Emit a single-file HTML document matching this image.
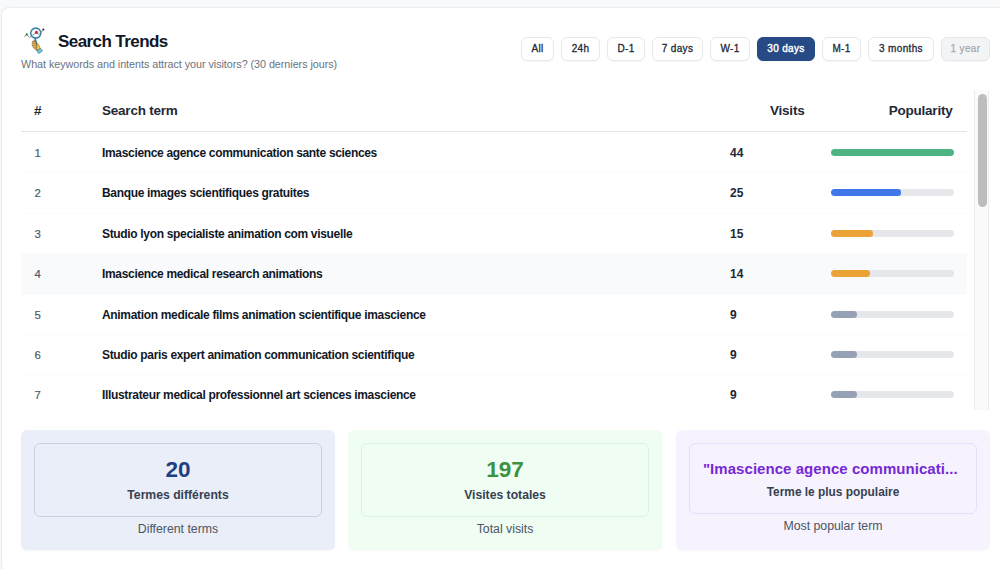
<!DOCTYPE html>
<html lang="en">
<head>
<meta charset="utf-8">
<title>Search Trends</title>
<style>
*{box-sizing:border-box;margin:0;padding:0}
html,body{width:1000px;height:569px;overflow:hidden}
body{background:#f8f9fb;font-family:"Liberation Sans",sans-serif;color:#111827;position:relative}
.card{position:absolute;left:1px;top:7px;width:1010px;height:566px;background:#fff;border-radius:8px;border:1px solid #ededf0;box-shadow:0 0 2px rgba(0,0,0,.04)}
.abs{position:absolute;white-space:nowrap}
h1{position:absolute;left:58px;top:30.500px;font-size:17px;line-height:22px;font-weight:700;color:#111827;white-space:nowrap;letter-spacing:-0.58px}
.sub{left:21px;top:57px;font-size:10.800px;line-height:14px;color:#6b7280;letter-spacing:-0.055px}
.btns{position:absolute;top:37px;left:0;height:24px}
.btn{position:absolute;top:0;height:24px;border:1px solid #e6e8ec;border-radius:6px;background:#fff;font-size:10px;line-height:22px;text-align:center;letter-spacing:0.330px;color:#1f2937;font-weight:400;-webkit-text-stroke:0.3px #1f2937;white-space:nowrap;box-shadow:0 1px 1px rgba(0,0,0,.03)}
.btn.on{background:#264a85;border-color:#264a85;color:#fff;-webkit-text-stroke:0.4px #fff}
.btn.dis{background:#f3f4f6;border-color:#e5e7eb;color:#a3a9b3;-webkit-text-stroke:0.250px #a3a9b3}
.th{font-size:13.500px;line-height:18px;font-weight:700;color:#1f2937;top:102px;letter-spacing:-0.220px}
.hline{position:absolute;left:21px;top:131px;width:946px;height:1px;background:#e2e4e8}
.row{position:absolute;left:21px;width:946px;height:41px}
.row.alt{background:#f9fafc}
.row.bd{box-shadow:inset 0 1px 0 #f9fafb}
.row .n{position:absolute;left:13.500px;top:13px;font-size:11.400px;line-height:16px;color:#4b5563;-webkit-text-stroke:0.150px #4b5563}
.row .t{position:absolute;left:81px;top:13px;font-size:12px;line-height:16px;color:#111827;font-weight:700;white-space:nowrap;letter-spacing:-0.330px}
.row .v{position:absolute;left:709px;top:13px;font-size:12px;line-height:16px;color:#1f2937;font-weight:700}
.row .bar{position:absolute;left:810px;top:17px;width:122.500px;height:6.500px;border-radius:3.250px;background:#e5e7eb;overflow:hidden}
.row .bar i{display:block;height:6.500px;border-radius:3.250px}
.strack{position:absolute;left:974px;top:90px;width:15px;height:320px;background:#fafafa;border-left:1px solid #ececec;border-right:1px solid #ececec}
.sthumb{position:absolute;left:978px;top:94px;width:9px;height:113px;border-radius:5px;background:#bdbdbd}
.stat{position:absolute;top:429.600px;width:314px;height:120px;border-radius:6px;box-shadow:0 1px 2px rgba(0,0,0,.035)}
.stat .in{position:absolute;left:13px;top:13px;width:288px;height:74px;border-radius:6px;border:1px solid}
.stat .num{position:absolute;left:0;width:100%;text-align:center;top:13.600px;font-size:22.500px;line-height:26px;font-weight:700}
.stat .lab{position:absolute;left:0;width:100%;text-align:center;top:43.600px;font-size:12.200px;line-height:16px;font-weight:700;color:#374151}
.stat .ft{position:absolute;left:0;width:100%;text-align:center;top:91.600px;font-size:12.300px;line-height:16px;color:#4b5563}
</style>
</head>
<body>
<div class="card"></div>

<svg class="abs" style="left:18px;top:22px" width="36" height="36" viewBox="0 0 36 36">
  <path d="M6.300 15 L8.700 12.400 L11.550 15.500 L18.400 10.400 L21.200 12.500 L25.400 7.600" fill="none" stroke="#5b6470" stroke-width="0.700"/>
  <circle cx="17.800" cy="11.100" r="5" fill="none" stroke="#3b7f9e" stroke-width="1.600"/>
  <circle cx="17.800" cy="11.100" r="4" fill="none" stroke="#c5e5ee" stroke-width="0.500"/>
  <circle cx="8.700" cy="12.400" r="1.050" fill="#2e6b2f"/>
  <circle cx="25.400" cy="7.600" r="1" fill="#2b2b2b"/>
  <circle cx="18.400" cy="10.400" r="1.300" fill="#c8283c" stroke="#8e1f2c" stroke-width="0.400"/>
  <path d="M17 16.300 L19.600 25.600" stroke="#3b7f9e" stroke-width="1.600" stroke-linecap="round"/>
  <path d="M14.300 19.600 C15.200 18.600 16.600 18.400 17.300 18.900 L19.300 25.800 L18.600 28.200 C16.600 27.300 14.900 25.600 14.300 23.300 Z" fill="#c98d33" stroke="#5f5230" stroke-width="0.550" stroke-linejoin="round"/>
  <path d="M14.300 20.900 h2.900 M14.400 22.700 h3.300 M14.900 24.500 h3.300 M15.900 26.200 h2.800" stroke="#f0d9a0" stroke-width="0.450" stroke-linecap="round"/>
  <path d="M18.600 20.500 C20.200 21.600 21.800 24.300 22.300 27 L19.400 28.500 C18.600 27.200 18.500 25.500 18.900 24.200 Z" fill="#f3c73f" stroke="#6b5a2c" stroke-width="0.500" stroke-linejoin="round"/>
  <path d="M18.700 28.700 L22.600 26.500 L24.500 29 L20.700 31.500 Z" fill="#74c8e2" stroke="#2d5f73" stroke-width="0.600" stroke-linejoin="round"/>
</svg>
<h1>Search Trends</h1>
<div class="abs sub">What keywords and intents attract your visitors? (30 derniers jours)</div>

<div class="btns">
  <div class="btn" style="left:521px;width:33px">All</div>
  <div class="btn" style="left:561px;width:39px">24h</div>
  <div class="btn" style="left:607px;width:38px">D-1</div>
  <div class="btn" style="left:652px;width:51px">7 days</div>
  <div class="btn" style="left:710px;width:40px">W-1</div>
  <div class="btn on" style="left:757px;width:58px">30 days</div>
  <div class="btn" style="left:822px;width:39px">M-1</div>
  <div class="btn" style="left:868px;width:66px">3 months</div>
  <div class="btn dis" style="left:941px;width:49px">1 year</div>
</div>

<div class="abs th" style="left:34px">#</div>
<div class="abs th" style="left:102px">Search term</div>
<div class="abs th" style="left:770px">Visits</div>
<div class="abs th" style="right:47.500px">Popularity</div>
<div class="hline"></div>

<div class="row" style="top:132px"><span class="n">1</span><span class="t">Imascience agence communication sante sciences</span><span class="v">44</span><div class="bar"><i style="width:100%;background:#4db380"></i></div></div>
<div class="row bd" style="top:172px"><span class="n">2</span><span class="t">Banque images scientifiques gratuites</span><span class="v">25</span><div class="bar"><i style="width:57%;background:#3f76e8"></i></div></div>
<div class="row bd" style="top:213px"><span class="n">3</span><span class="t">Studio lyon specialiste animation com visuelle</span><span class="v">15</span><div class="bar"><i style="width:34%;background:#eba337"></i></div></div>
<div class="row bd alt" style="top:253px"><span class="n">4</span><span class="t">Imascience medical research animations</span><span class="v">14</span><div class="bar"><i style="width:32%;background:#eba337"></i></div></div>
<div class="row bd" style="top:294px"><span class="n">5</span><span class="t">Animation medicale films animation scientifique imascience</span><span class="v">9</span><div class="bar"><i style="width:21%;background:#96a1b5"></i></div></div>
<div class="row bd" style="top:334px"><span class="n">6</span><span class="t">Studio paris expert animation communication scientifique</span><span class="v">9</span><div class="bar"><i style="width:21%;background:#96a1b5"></i></div></div>
<div class="row bd" style="top:374px;height:36px"><span class="n">7</span><span class="t">Illustrateur medical professionnel art sciences imascience</span><span class="v">9</span><div class="bar"><i style="width:21%;background:#96a1b5"></i></div></div>

<div class="strack"></div>
<div class="sthumb"></div>

<div class="stat" style="left:21px;background:#e9eef8">
  <div class="in" style="border-color:#c9d1e0"><div class="num" style="color:#1e4080">20</div><div class="lab">Termes différents</div></div>
  <div class="ft">Different terms</div>
</div>
<div class="stat" style="left:348px;background:#effdf3">
  <div class="in" style="border-color:#d9f3e0"><div class="num" style="color:#3d9142">197</div><div class="lab">Visites totales</div></div>
  <div class="ft">Total visits</div>
</div>
<div class="stat" style="left:676px;background:#f6f3fe">
  <div class="in" style="border-color:#e6dffa;height:71px"><div class="num" style="color:#7528d4;font-size:15px;top:12.500px;letter-spacing:0.050px;left:-2.700px">"Imascience agence communicati...</div><div class="lab" style="top:40.400px;font-size:11.900px">Terme le plus populaire</div></div>
  <div class="ft" style="top:88.300px">Most popular term</div>
</div>
</body>
</html>
